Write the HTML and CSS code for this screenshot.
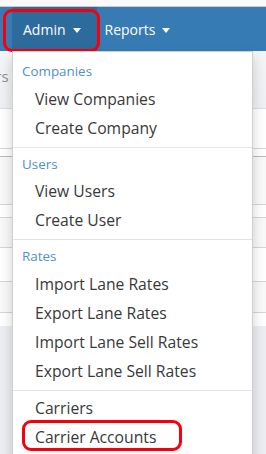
FILE: index.html
```html
<!DOCTYPE html>
<html lang="en">
<head>
    <meta charset="UTF-8">
    <meta name="viewport" content="width=device-width, initial-scale=1.0">
    <title>Admin Menu</title>
    <link rel="stylesheet" href="styles.css">
</head>
<body>
    <div class="topstrip"></div>

    <!-- Navigation -->
    <nav class="navbar">
        <a class="nav-item active" href="#">Admin <span class="caret"></span></a>
        <a class="nav-item" href="#">Reports <span class="caret"></span></a>
        <span class="ring ring-admin"></span>

        <ul class="dropdown">
            <li class="dropdown-header">Companies</li>
            <li><a href="#">View Companies</a></li>
            <li><a href="#">Create Company</a></li>
            <li class="divider"></li>
            <li class="dropdown-header">Users</li>
            <li><a href="#">View Users</a></li>
            <li><a href="#">Create User</a></li>
            <li class="divider"></li>
            <li class="dropdown-header">Rates</li>
            <li><a href="#">Import Lane Rates</a></li>
            <li><a href="#">Export Lane Rates</a></li>
            <li><a href="#">Import Lane Sell Rates</a></li>
            <li><a href="#">Export Lane Sell Rates</a></li>
            <li class="divider"></li>
            <li><a href="#">Carriers</a></li>
            <li class="marked"><a href="#">Carrier Accounts</a><span class="ring ring-item"></span></li>
        </ul>
    </nav>

    <!-- Page behind the menu -->
    <main class="page">
        <div class="panel-head"><span class="panel-title">Carriers</span></div>
        <div class="row r1"></div>
        <div class="row r2"></div>
        <div class="row r3"></div>
        <div class="row r4"></div>
        <div class="row r5"></div>
        <div class="row r6"></div>
        <div class="row r7"></div>
        <div class="row r8"></div>
        <div class="page-foot"></div>
    </main>
</body>
</html>
```

FILE: styles.css
```css
body {
    margin: 0;
    font-family: "Open Sans", "Liberation Sans", sans-serif;
    background: #fff;
    overflow: hidden;
}

.topstrip {
    height: 6px;
    background: #fafafa;
    border-bottom: 1px solid #c8c8c8;
}

.navbar {
    position: relative;
    display: flex;
    align-items: stretch;
    height: 44px;
    padding-left: 12px;
    background: #367bb3;
}

.nav-item {
    display: flex;
    align-items: center;
    color: #fff;
    font-size: 14px;
    text-decoration: none;
}

.nav-item.active {
    padding: 0 16px 0 11px;
    background: #2d6b9c;
}

.nav-item + .nav-item {
    padding-left: 8px;
}

.caret {
    width: 0;
    height: 0;
    margin-left: 7px;
    margin-top: 2px;
    border-top: 5px solid #fff;
    border-left: 4px solid transparent;
    border-right: 4px solid transparent;
}

.ring {
    position: absolute;
    box-sizing: border-box;
    border: 3px solid #f5000c;
    border-radius: 9px;
    pointer-events: none;
}

.ring-admin {
    left: 3px;
    top: 2px;
    width: 97px;
    height: 43px;
}

/* Dropdown */
.dropdown {
    position: absolute;
    top: 100%;
    left: 12px;
    z-index: 10;
    box-sizing: border-box;
    width: 241px;
    height: 420px;
    margin: 0;
    padding: 6px 0 0;
    list-style: none;
    background: #fff;
    border: 1px solid #cfcfcf;
    border-bottom: none;
    box-shadow: 0 6px 12px rgba(0, 0, 0, 0.18);
}

.dropdown-header {
    padding: 4px 9px 3.5px;
    font-size: 13.4px;
    line-height: 19px;
    color: #4f8fca;
}

.dropdown li a {
    display: block;
    padding-left: 22px;
    font-size: 15.7px;
    line-height: 29px;
    color: #383838;
    text-decoration: none;
}

.divider {
    height: 1px;
    margin: 4px 0 3px;
    background: #e3e3e3;
}

.marked {
    position: relative;
}

.ring-item {
    left: 9px;
    top: -3px;
    width: 160px;
    height: 31px;
}

/* Page behind */
.page {
    background: #fff;
}

.panel-head {
    height: 57px;
    border-bottom: 1px solid #dadde2;
    background: linear-gradient(#f4f5f7, #eef0f3);
}

.panel-title {
    display: block;
    margin-left: -47px;
    padding-top: 15px;
    font-size: 15px;
    color: #8a919b;
}

.row {
    border-bottom: 1px solid #d6d6d6;
}

.r1 { height: 39px; }
.r2 { height: 7px; border-bottom-color: #bbb; }
.r3 { height: 47px; background: #f9f9f9; }
.r4 { height: 12px; }
.r5 { height: 29px; background: #f9f9f9; }
.r6 { height: 33px; }
.r7 { height: 30px; background: #f9f9f9; }
.r8 { height: 13px; border-bottom: none; }

.page-foot {
    height: 140px;
    background: #eceef3;
}
```
